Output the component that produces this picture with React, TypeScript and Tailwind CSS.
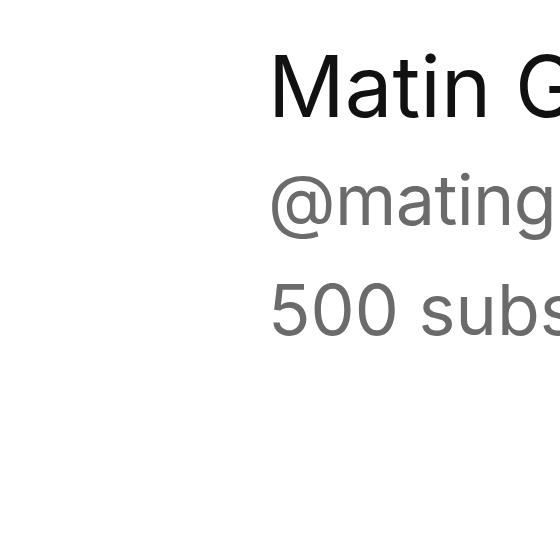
export default function App() {
  return (
    <div className="w-[560px] h-[560px] overflow-hidden bg-white" style={{ fontFamily: "Inter, 'Liberation Sans', sans-serif" }}>
      <div className="flex flex-col pl-[268px] pt-[29px] whitespace-nowrap">
        <div className="text-[85px] leading-[116px] text-[#111111]">Matin Gholami</div>
        <div className="text-[70px] leading-[110px] tracking-[-0.6px] text-[#6b6b6b]">@matingholami</div>
        <div className="text-[70px] leading-[110px] text-[#6b6b6b]">500 subscribers</div>
      </div>
    </div>
  );
}
